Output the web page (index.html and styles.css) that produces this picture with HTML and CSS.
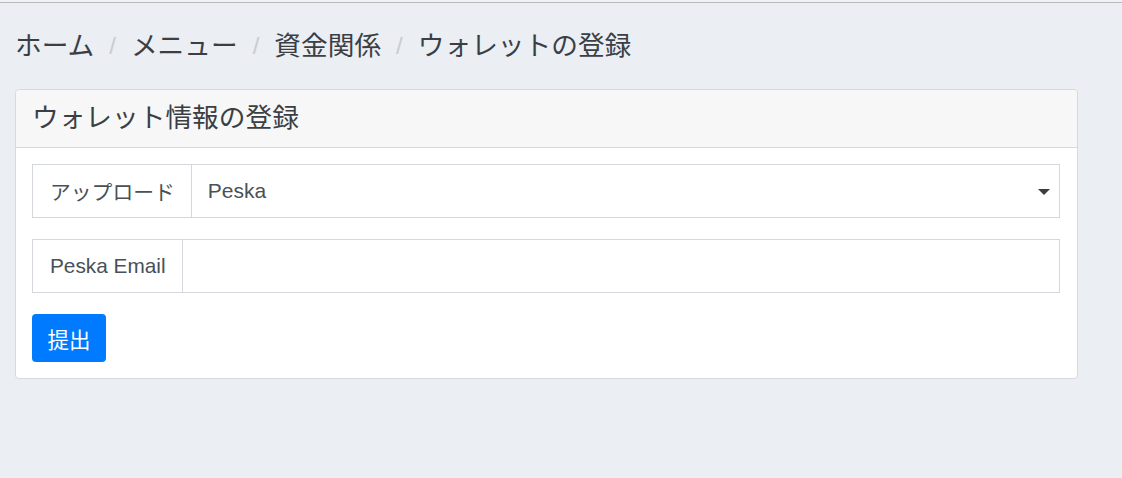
FILE: index.html
```html
<!DOCTYPE html>
<html lang="ja">
<head>
<meta charset="utf-8">
<title>ウォレットの登録</title>
<link rel="stylesheet" href="styles.css">
</head>
<body>
<div class="topbar"></div>
<main class="page">
  <nav class="breadcrumb">
    <span class="crumb">ホーム</span>
    <span class="sep">/</span>
    <span class="crumb">メニュー</span>
    <span class="sep">/</span>
    <span class="crumb">資金関係</span>
    <span class="sep">/</span>
    <span class="crumb active">ウォレットの登録</span>
  </nav>
  <section class="card">
    <header class="card-header">ウォレット情報の登録</header>
    <div class="card-body">
      <div class="input-group">
        <span class="group-label">アップロード</span>
        <div class="select">
          <span class="select-value">Peska</span>
          <svg class="caret" width="12" height="6" viewBox="0 0 12 6"><polygon points="0,0 12,0 6,6" fill="#3a3d41"/></svg>
        </div>
      </div>
      <div class="input-group">
        <span class="group-label">Peska Email</span>
        <input class="text-input" type="text">
      </div>
      <button class="btn" type="button">提出</button>
    </div>
  </section>
</main>
</body>
</html>
```
FILE: styles.css
```css
html, body {
  margin: 0;
  padding: 0;
}
body {
  background: #ebeef3;
  font-family: "Liberation Sans", "Noto Sans CJK JP", sans-serif;
  color: #343a40;
  height: 478px;
  overflow: hidden;
}
.topbar {
  height: 2px;
  background: #f0f2f5;
  border-bottom: 1px solid #b8b9bb;
}
.page {
  padding: 0 44px 0 15px;
}
.breadcrumb {
  display: flex;
  align-items: center;
  margin: 23px 0 23px 0;
  height: 40px;
  font-size: 26.7px;
  line-height: 40px;
  color: #3b3f44;
}
.sep {
  color: #c9ccd1;
  padding: 0 15px;
  font-size: 24px;
}
.card {
  background: #fff;
  border: 1px solid #d6d9de;
  border-radius: 4px;
}
.card-header {
  background: #f7f7f7;
  border-bottom: 1px solid #d6d9de;
  border-radius: 4px 4px 0 0;
  height: 57px;
  line-height: 56px;
  padding: 0 16px;
  font-size: 26.7px;
  color: #3b3f44;
}
.card-body {
  padding: 16px 17px 16px 16px;
  display: flex;
  flex-direction: column;
  align-items: flex-start;
}
.input-group {
  display: flex;
  align-self: stretch;
  height: 54px;
  margin-bottom: 21px;
}
.group-label {
  display: flex;
  align-items: center;
  padding: 0 16px 0 17px;
  border: 1px solid #d4d7db;
  background: #fff;
  font-size: 20.8px;
  color: #495057;
  white-space: nowrap;
}
.select {
  flex: 1;
  display: flex;
  align-items: center;
  justify-content: space-between;
  border: 1px solid #d4d7db;
  border-left: none;
  padding: 0 16px 0 16px;
  font-size: 21px;
  color: #495057;
}
.caret {
  display: block;
  margin-right: -7px;
  margin-top: 1px;
}
.text-input {
  flex: 1;
  border: 1px solid #d4d7db;
  border-left: none;
  margin: 0;
  padding: 0 16px;
  font: inherit;
  font-size: 21px;
  color: #495057;
  outline: none;
}
.btn {
  height: 48px;
  width: 74px;
  padding: 0;
  border: none;
  border-radius: 4px;
  background: #007bff;
  color: #fff;
  font-family: "Liberation Sans", "Noto Sans CJK JP", sans-serif;
  font-size: 21.5px;
  cursor: pointer;
}
```
